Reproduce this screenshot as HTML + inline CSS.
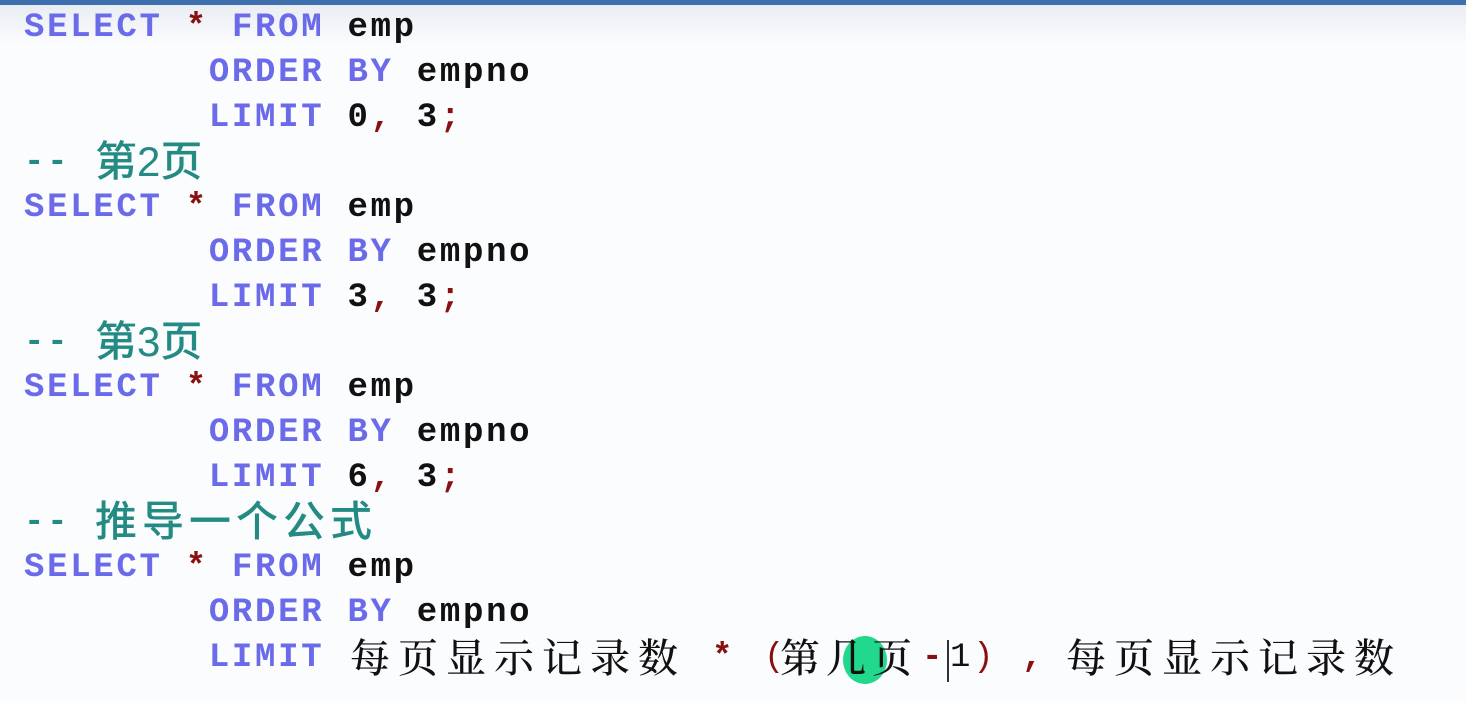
<!DOCTYPE html>
<html><head><meta charset="utf-8"><style>
body{margin:0;width:1466px;height:701px;overflow:hidden;background:#fbfcfe;position:relative}
.top{position:absolute;left:0;top:0;width:1466px;height:5px;background:#3d6fae}
.sh{position:absolute;left:0;top:5px;width:1466px;height:40px;background:linear-gradient(#e9edf3,#fbfcfe)}
.l{position:absolute;left:24px;height:45px;line-height:45px;font-family:"Liberation Mono",monospace;font-weight:bold;font-size:34px;letter-spacing:2.7px;white-space:pre;color:#111}
.k{color:#6b6bea}.r{color:#8a1010}.c{color:#248a84}
.cj{position:absolute;font-family:"Liberation Sans","Noto Sans CJK SC",sans-serif;font-weight:normal;letter-spacing:0;line-height:45px;height:45px;font-size:40px;white-space:pre}
.cm{font-size:42px;font-weight:500;top:-2px}
.sf{font-family:"Liberation Serif","Noto Serif CJK SC",serif;font-size:40px;color:#111;font-weight:500}
</style></head><body>
<div class="top"></div><div class="sh"></div>
<div class="l" style="top:6px"><span class="k">SELECT</span> <span class="r">*</span> <span class="k">FROM</span> emp</div>
<div class="l" style="top:51px">        <span class="k">ORDER BY</span> empno</div>
<div class="l" style="top:96px">        <span class="k">LIMIT</span> 0<span class="r">,</span> 3<span class="r">;</span></div>
<div class="l c" style="top:141px">--<span class="cj cm" style="left:71px">第2页</span></div>
<div class="l" style="top:186px"><span class="k">SELECT</span> <span class="r">*</span> <span class="k">FROM</span> emp</div>
<div class="l" style="top:231px">        <span class="k">ORDER BY</span> empno</div>
<div class="l" style="top:276px">        <span class="k">LIMIT</span> 3<span class="r">,</span> 3<span class="r">;</span></div>
<div class="l c" style="top:321px">--<span class="cj cm" style="left:71px">第3页</span></div>
<div class="l" style="top:366px"><span class="k">SELECT</span> <span class="r">*</span> <span class="k">FROM</span> emp</div>
<div class="l" style="top:411px">        <span class="k">ORDER BY</span> empno</div>
<div class="l" style="top:456px">        <span class="k">LIMIT</span> 6<span class="r">,</span> 3<span class="r">;</span></div>
<div class="l c" style="top:501px">--<span class="cj cm" style="left:71px;letter-spacing:5px">推导一个公式</span></div>
<div class="l" style="top:546px"><span class="k">SELECT</span> <span class="r">*</span> <span class="k">FROM</span> emp</div>
<div class="l" style="top:591px">        <span class="k">ORDER BY</span> empno</div>
<div class="l" style="top:636px">        <span class="k">LIMIT</span></div>
<div style="position:absolute;left:843px;top:636px;width:44px;height:48px;border-radius:50%;background:#22d88c"></div>
<div class="cj sf" style="left:350px;top:636px;letter-spacing:8px">每页显示记录数</div>
<div class="l r" style="top:636px;left:712px">*</div>
<div class="l r" style="top:636px;left:764px;font-weight:normal">(</div>
<div class="cj sf" style="left:780px;top:636px;letter-spacing:6px">第几页</div>
<div class="l r" style="top:636px;left:922px">-</div>
<div style="position:absolute;left:947px;top:640px;width:2px;height:42px;background:#333"></div>
<div class="l" style="top:636px;left:950px;font-weight:normal">1<span class="r">)</span></div>
<div class="l r" style="top:636px;left:1022px">,</div>
<div class="cj sf" style="left:1066px;top:636px;letter-spacing:8px">每页显示记录数</div>
</body></html>
